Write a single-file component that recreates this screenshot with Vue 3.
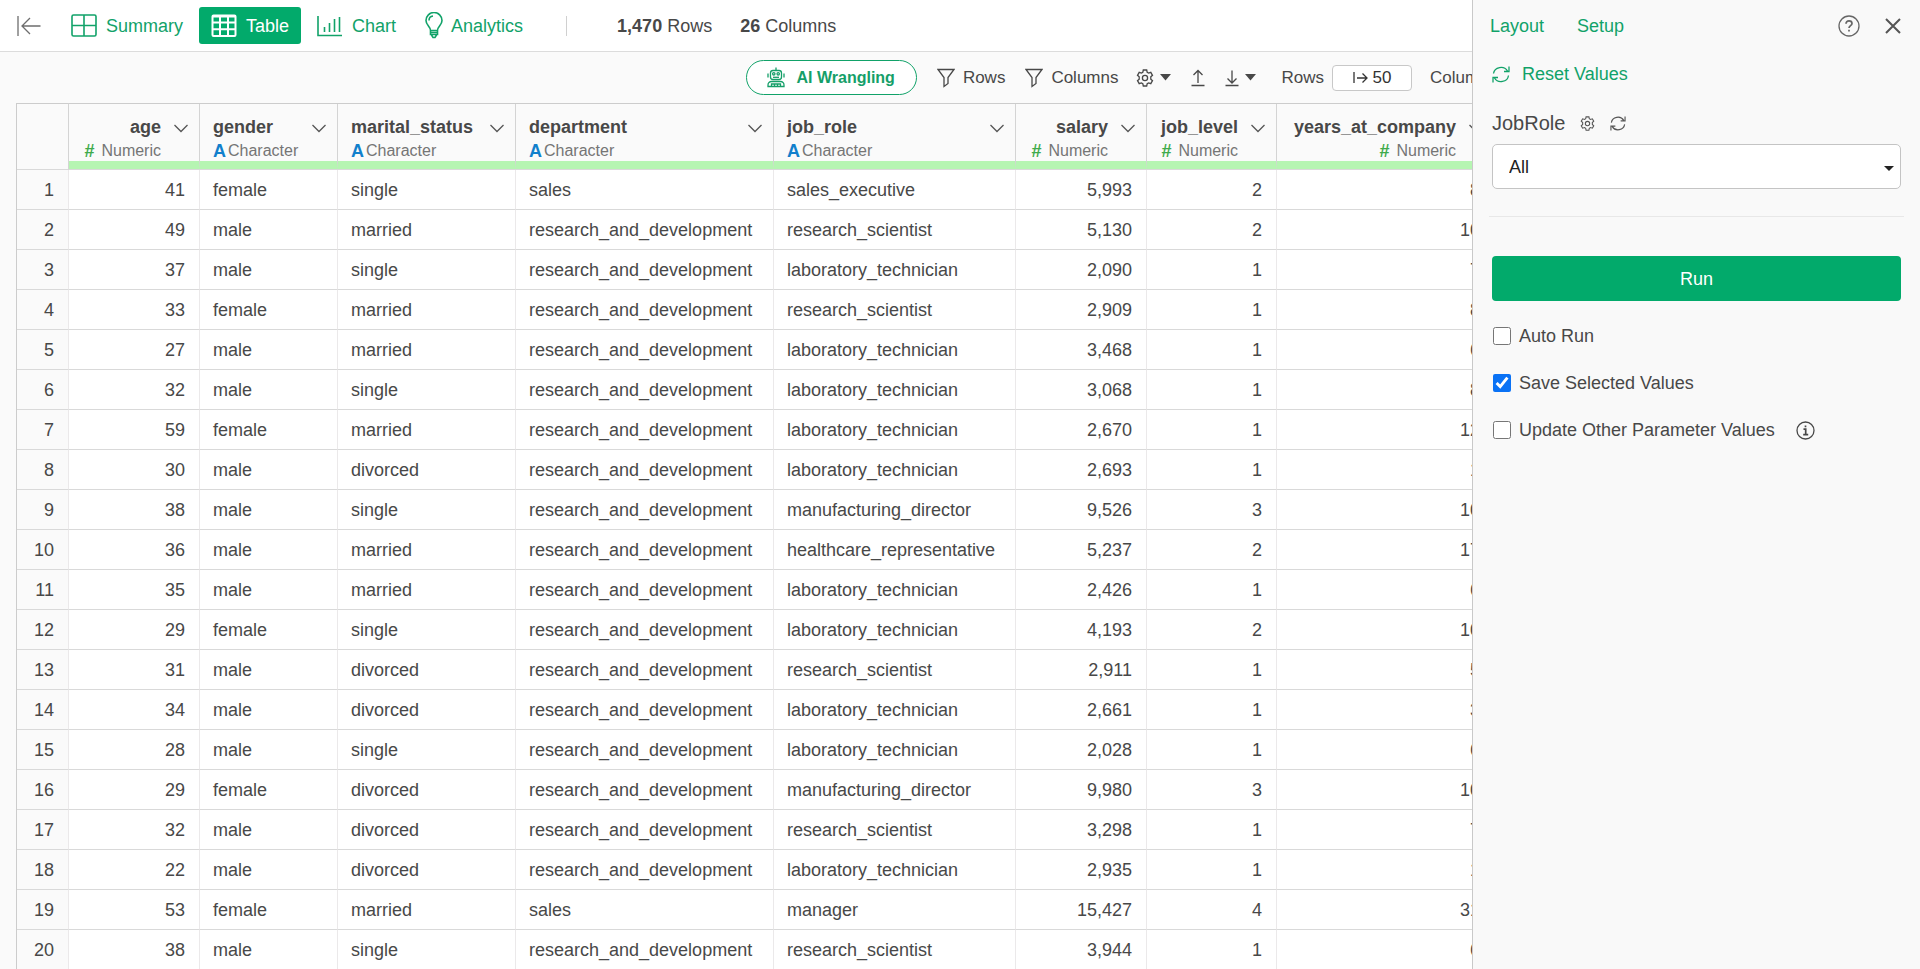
<script setup>
import { ref } from 'vue'

const columns = [
  { key: 'age', numeric: true, cls: 'w-num' },
  { key: 'gender', numeric: false, cls: 'w-gender' },
  { key: 'marital_status', numeric: false, cls: 'w-marital' },
  { key: 'department', numeric: false, cls: 'w-dept' },
  { key: 'job_role', numeric: false, cls: 'w-role' },
  { key: 'salary', numeric: true, cls: 'w-num' },
  { key: 'job_level', numeric: true, cls: 'w-level' },
  { key: 'years_at_company', numeric: true, cls: 'w-years' }
]

const rd = 'research_and_development'
const lab = 'laboratory_technician'
const sci = 'research_scientist'
const rows = [
  [41, 'female', 'single', 'sales', 'sales_executive', '5,993', 2, 8],
  [49, 'male', 'married', rd, sci, '5,130', 2, 10],
  [37, 'male', 'single', rd, lab, '2,090', 1, 7],
  [33, 'female', 'married', rd, sci, '2,909', 1, 8],
  [27, 'male', 'married', rd, lab, '3,468', 1, 6],
  [32, 'male', 'single', rd, lab, '3,068', 1, 8],
  [59, 'female', 'married', rd, lab, '2,670', 1, 12],
  [30, 'male', 'divorced', rd, lab, '2,693', 1, 1],
  [38, 'male', 'single', rd, 'manufacturing_director', '9,526', 3, 10],
  [36, 'male', 'married', rd, 'healthcare_representative', '5,237', 2, 17],
  [35, 'male', 'married', rd, lab, '2,426', 1, 6],
  [29, 'female', 'single', rd, lab, '4,193', 2, 10],
  [31, 'male', 'divorced', rd, sci, '2,911', 1, 5],
  [34, 'male', 'divorced', rd, lab, '2,661', 1, 3],
  [28, 'male', 'single', rd, lab, '2,028', 1, 6],
  [29, 'female', 'divorced', rd, 'manufacturing_director', '9,980', 3, 10],
  [32, 'male', 'divorced', rd, sci, '3,298', 1, 7],
  [22, 'male', 'divorced', rd, lab, '2,935', 1, 1],
  [53, 'female', 'married', 'sales', 'manager', '15,427', 4, 31],
  [38, 'male', 'single', rd, sci, '3,944', 1, 6]
]

const jobRole = ref('All')
const autoRun = ref(false)
const saveValues = ref(true)
const updateOthers = ref(false)
</script>

<template>
  <div class="app">
    <main class="main">
      <header class="topbar">
        <button class="back" aria-label="Collapse">
          <svg width="24" height="22" viewBox="0 0 24 22"><path d="M1 1v20M23.500 11H5M13 3l-8 8 8 8" /></svg>
        </button>
        <nav class="tabs">
          <a href="#" class="tab">
            <svg width="26" height="24" viewBox="0 0 26 24"><rect x="1" y="1" width="24" height="21" rx="1.500" /><path d="M13 1v21M1 11.500h24" /></svg>
            <span>Summary</span>
          </a>
          <a href="#" class="tab active">
            <svg width="26" height="24" viewBox="0 0 26 24"><rect x="1.500" y="1.500" width="23" height="20.500" rx="1" /><path d="M1 2.500h24M1 8.500h24M1 15.200h24M9 3v19M17 3v19" /></svg>
            <span>Table</span>
          </a>
          <a href="#" class="tab">
            <svg width="26" height="24" viewBox="0 0 26 24"><path d="M1 2v19.500h24M7.500 13v5M12.500 9v9M17.500 5v13M22.500 3v15" /></svg>
            <span>Chart</span>
          </a>
          <a href="#" class="tab bulb">
            <svg width="20" height="27" viewBox="0 0 20 27"><path d="M6.500 18.500c0-4-4.500-5-4.500-10a8 8 0 0 1 16 0c0 5-4.500 6-4.500 10zM6.500 18.500v4h7v-4M7.500 23l1.500 2.500h2l1.500-2.500M5 8.500c0-2.500 1.500-4.200 4-4.500M6.500 20.500h7" /></svg>
            <span>Analytics</span>
          </a>
        </nav>
        <span class="divider"></span>
        <p class="counts"><span><b>1,470</b> Rows</span><span><b>26</b> Columns</span></p>
      </header>

      <div class="toolbar">
        <button class="ai">
          <svg width="18" height="21" viewBox="0 0 18 21">
            <path d="M9 0.500v3M1 6.500v4M17 6.500v4" />
            <rect x="3.500" y="3.500" width="11" height="9" rx="2.500" />
            <circle cx="6.800" cy="6.800" r="1.200" /><circle cx="11.200" cy="6.800" r="1.200" />
            <path d="M6 10.300h6" />
            <path d="M1 19.500v-1.500a3.500 3.500 0 0 1 3.500-3.500h9a3.500 3.500 0 0 1 3.500 3.500v1.500zM4.500 19v-2h9v2M7.500 17v2M10.500 17v2" />
          </svg>
          <span>AI Wrangling</span>
        </button>
        <button class="tool filter">
          <svg width="18" height="20" viewBox="0 0 18 20"><path d="M1 1.500h16L11 9.500v6L7 18.500v-9z" /></svg>
          <span>Rows</span>
        </button>
        <button class="tool filter">
          <svg width="18" height="20" viewBox="0 0 18 20"><path d="M1 1.500h16L11 9.500v6L7 18.500v-9z" /></svg>
          <span>Columns</span>
        </button>
        <button class="tool menu" aria-label="Settings">
          <svg width="18" height="18" viewBox="0 0 18 18"><path d="M7.300 1h3.400l.5 2.300 1.400.8 2.200-.7 1.700 2.900-1.700 1.600v2.200l1.700 1.600-1.700 2.900-2.200-.7-1.400.8-.5 2.300H7.300l-.5-2.300-1.400-.8-2.200.7-1.700-2.900 1.700-1.600V7.900L1.500 6.300l1.700-2.900 2.200.7 1.400-.8z" /><circle cx="9" cy="9" r="2.600" /></svg>
          <svg class="caret" width="11" height="7" viewBox="0 0 11 7"><path d="M0 0h11L5.500 6.500z" /></svg>
        </button>
        <button class="tool upload" aria-label="Upload">
          <svg width="14" height="18" viewBox="0 0 14 18"><path d="M7 14V1.500M2.500 6L7 1.500 11.500 6M0.500 16.500h13" /></svg>
        </button>
        <button class="tool menu download" aria-label="Download">
          <svg width="14" height="18" viewBox="0 0 14 18"><path d="M7 1.500v12M2.500 9.500L7 14l4.500-4.500M0.500 16.500h13" /></svg>
          <svg class="caret" width="11" height="7" viewBox="0 0 11 7"><path d="M0 0h11L5.500 6.500z" /></svg>
        </button>
        <span class="rows-label" id="rows-label">Rows</span>
        <button class="amount" aria-labelledby="rows-label">
          <svg width="15" height="14" viewBox="0 0 15 14"><path d="M1 1v11M4 7h10M9.500 2.500L14 7l-4.500 4.500" /></svg>
          <span>50</span>
        </button>
        <span class="cols-label">Columns</span>
      </div>

      <div class="sheet">
        <table>
          <colgroup>
            <col class="w-index" />
            <col v-for="c in columns" :key="c.key" :class="c.cls" />
          </colgroup>
          <thead>
            <tr>
              <th class="index"></th>
              <th v-for="c in columns" :key="c.key">
                <div class="head" :class="{ right: c.numeric }">
                  <div class="names">
                    <div class="name">{{ c.key }}</div>
                    <div class="type">
                      <b :class="c.numeric ? 'hash' : 'letter'">{{ c.numeric ? '#' : 'A' }}</b>
                      <span>{{ c.numeric ? 'Numeric' : 'Character' }}</span>
                    </div>
                  </div>
                  <button class="chev" :aria-label="'Menu for ' + c.key">
                    <svg width="14" height="9" viewBox="0 0 14 9"><path d="M0.500 1L7 7.500 13.500 1" /></svg>
                  </button>
                </div>
              </th>
            </tr>
          </thead>
          <tbody>
            <tr v-for="(r, i) in rows" :key="i">
              <td class="index">{{ i + 1 }}</td>
              <td v-for="(v, j) in r" :key="j" :class="{ num: columns[j].numeric }">{{ v }}</td>
            </tr>
          </tbody>
        </table>
      </div>
    </main>

    <aside class="panel">
      <div class="panel-top">
        <a href="#">Layout</a>
        <a href="#">Setup</a>
        <button class="help" aria-label="Help">
          <svg width="22" height="22" viewBox="0 0 22 22"><circle cx="11" cy="11" r="10" /><path class="thick" d="M8 8.800c0-2 1.300-3 3-3s3 1 3 2.600c0 2.200-3 2.300-3 4.600M11 14.800v1.800" /></svg>
        </button>
        <button class="close" aria-label="Close">
          <svg width="16" height="16" viewBox="0 0 16 16"><path d="M1 1l14 14M15 1L1 15" /></svg>
        </button>
      </div>

      <button class="reset">
        <svg width="18" height="17" viewBox="0 0 18 17"><path d="M1.500 7.500A7.500 7 0 0 1 15.500 5M17 0.500V5.500H12M16.500 9.500A7.500 7 0 0 1 2.500 12M1 16.500V11.500H6" /></svg>
        <span>Reset Values</span>
      </button>

      <div class="param">
        <label for="jobrole">JobRole</label>
        <button aria-label="Parameter settings">
          <svg width="15" height="15" viewBox="0 0 18 18"><path d="M7.300 1h3.400l.5 2.300 1.400.8 2.200-.7 1.700 2.900-1.700 1.600v2.200l1.700 1.600-1.700 2.900-2.200-.7-1.400.8-.5 2.300H7.300l-.5-2.300-1.400-.8-2.200.7-1.700-2.900 1.700-1.600V7.900L1.500 6.300l1.700-2.900 2.200.7 1.400-.8z" /><circle cx="9" cy="9" r="2.600" /></svg>
        </button>
        <button aria-label="Refresh parameter">
          <svg width="16" height="15" viewBox="0 0 18 17"><path d="M1.500 7.500A7.500 7 0 0 1 15.500 5M17 0.500V5.500H12M16.500 9.500A7.500 7 0 0 1 2.500 12M1 16.500V11.500H6" /></svg>
        </button>
      </div>
      <div class="select">
        <select id="jobrole" v-model="jobRole">
          <option>All</option>
        </select>
        <svg class="caret" width="10" height="5" viewBox="0 0 10 5"><path d="M0 0h10L5 5z" /></svg>
      </div>

      <hr />

      <button class="run">Run</button>

      <div class="checks">
        <label><input v-model="autoRun" type="checkbox" /><span>Auto Run</span></label>
        <label><input v-model="saveValues" type="checkbox" /><span>Save Selected Values</span></label>
        <div class="check-row">
          <label><input v-model="updateOthers" type="checkbox" /><span>Update Other Parameter Values</span></label>
          <svg width="19" height="19" viewBox="0 0 19 19"><circle cx="9.500" cy="9.500" r="8.500" /><path class="thick" d="M7.500 8.200h2.200v5.300M7.200 13.700h5M9.500 4.500v1.800" /></svg>
        </div>
      </div>
    </aside>
  </div>
</template>

<style>
body {
  margin: 0;
  background: #fafafa;
}
</style>

<style scoped>
.app {
  display: grid;
  grid-template-columns: minmax(0, 1fr) 448px;
  height: 100vh;
  overflow: hidden;
  background: #fafafa;
  color: #484848;
  font-family: "Liberation Sans", Arial, Helvetica, sans-serif;
  font-size: 18px;
  line-height: 24px;
}
button {
  display: flex;
  align-items: center;
  padding: 0;
  border: 0;
  background: none;
  color: inherit;
  font: inherit;
  cursor: pointer;
}
a {
  color: #11a269;
  text-decoration: none;
}
svg {
  flex: none;
  display: block;
  fill: none;
  stroke: currentColor;
  stroke-width: 1.3;
}
svg.caret {
  fill: currentColor;
  stroke: none;
}
.thick {
  stroke-width: 1.7;
}
.main {
  min-width: 0;
  overflow: hidden;
}
.topbar {
  display: flex;
  align-items: center;
  box-sizing: border-box;
  height: 52px;
  padding-left: 17px;
  border-bottom: 1px solid #dcdcdc;
  background: #fff;
  white-space: nowrap;
}
.back {
  color: #6e6e6e;
  margin-right: 18px;
}
.tabs {
  display: flex;
  gap: 4px;
}
.tab {
  display: flex;
  align-items: center;
  gap: 9px;
  height: 37px;
  padding: 0 12px;
  border-radius: 3px;
}
.tab.bulb {
  gap: 7px;
}
.tab svg {
  stroke-width: 1.6;
}
.tab.active {
  background: #02aa6b;
  color: #fff;
}
.tab.active svg {
  stroke-width: 2;
}
.divider {
  width: 1px;
  height: 20px;
  margin: 0 50px 0 31px;
  background: #d0d0d0;
}
.counts {
  display: flex;
  gap: 28px;
  margin: 0;
}
.toolbar {
  display: flex;
  align-items: center;
  justify-content: flex-end;
  height: 51px;
  font-size: 17px;
  white-space: nowrap;
}
.ai {
  box-sizing: border-box;
  gap: 12px;
  height: 35px;
  padding: 0 21px 0 20px;
  border: 1px solid #11a269;
  border-radius: 18px;
  background: #fff;
  color: #159f69;
  font-weight: 700;
  font-size: 16px;
}
.tool {
  gap: 8px;
}
.filter {
  margin-left: 20px;
}
.menu {
  gap: 6px;
  margin-left: 18px;
}
.upload {
  margin-left: 20px;
}
.download {
  margin-left: 20px;
}
.rows-label {
  margin: 0 8px 0 25px;
}
.amount {
  box-sizing: border-box;
  justify-content: center;
  gap: 5px;
  width: 80px;
  height: 26px;
  border: 1px solid #c8c8c8;
  border-radius: 4px;
  background: #fff;
  color: #333;
}
.cols-label {
  width: 42px;
  margin-left: 18px;
}
.sheet {
  padding-left: 16px;
}
table {
  table-layout: fixed;
  width: 1479px;
  border-collapse: separate;
  border-spacing: 0;
  border-left: 1px solid #ccc;
  background: #fff;
}
.w-index { width: 52px; }
.w-num { width: 131px; }
.w-gender { width: 138px; }
.w-marital { width: 178px; }
.w-dept { width: 258px; }
.w-role { width: 242px; }
.w-level { width: 130px; }
.w-years { width: 218px; }
th,
td {
  box-sizing: border-box;
  border-bottom: 1px solid #d9d9d9;
  white-space: nowrap;
}
th {
  height: 67px;
  padding: 0;
  border-top: 1px solid #ccc;
  background: #fafafa;
  text-align: left;
  vertical-align: top;
}
.head {
  display: flex;
  box-sizing: border-box;
  height: 65px;
  justify-content: space-between;
  gap: 13px;
  padding: 11px 11px 0 13px;
  border-right: 1px solid #d4d4d4;
  border-bottom: 8px solid #b6f5b2;
}
th.index {
  border-right: 1px solid #d4d4d4;
}
.head.right {
  justify-content: flex-end;
  padding-left: 0;
  text-align: right;
}
.name {
  font-weight: 700;
}
.type {
  display: flex;
  align-items: center;
  gap: 2px;
  height: 23px;
  color: #757575;
  font-size: 16px;
  font-weight: 400;
}
.right .type {
  justify-content: flex-end;
  gap: 7px;
}
.letter {
  color: #1180cc;
  font-size: 18px;
}
.hash {
  color: #3fab4c;
  font-size: 18px;
}
.chev {
  height: 26px;
  color: #555;
}
td {
  height: 40px;
  padding: 0 14px 0 13px;
  border-right: 1px solid #ebe9ea;
}
td.num,
td.index {
  text-align: right;
}
td.index {
  background: #fafafa;
}
.panel {
  box-sizing: border-box;
  padding: 0 19px;
  border-left: 1px solid #c9c9c9;
  background: #f9f9f9;
}
.panel-top {
  display: flex;
  align-items: center;
  gap: 33px;
  height: 51px;
  margin-left: -2px;
}
.help {
  margin-left: auto;
  color: #666;
}
.close {
  margin-left: -8px;
  color: #555;
}
.close svg {
  stroke-width: 2;
}
.reset {
  gap: 12px;
  margin-top: 11px;
  color: #11a269;
}
.param {
  display: flex;
  align-items: center;
  gap: 15px;
  margin-top: 25px;
  color: #555;
}
.param label {
  color: #484848;
  font-size: 20px;
}
.select {
  position: relative;
  margin-top: 9px;
}
select {
  box-sizing: border-box;
  width: 100%;
  height: 45px;
  padding: 0 16px;
  border: 1px solid #c4c4c4;
  border-radius: 5px;
  background: #fff;
  color: #222;
  font: inherit;
  appearance: none;
}
.select .caret {
  position: absolute;
  right: 7px;
  top: 22px;
  color: #222;
  pointer-events: none;
}
hr {
  margin: 27px -3px 39px;
  border: 0;
  border-top: 1px solid #e8e8e8;
}
.run {
  justify-content: center;
  width: 100%;
  height: 45px;
  border-radius: 4px;
  background: #02aa6b;
  color: #fff;
}
.checks {
  display: grid;
  gap: 23px;
  margin-top: 23px;
}
.checks label {
  display: flex;
  align-items: center;
  gap: 8px;
}
.checks input {
  width: 18px;
  height: 18px;
  margin: 0 0 0 1px;
  accent-color: #0a72f5;
}
.check-row {
  display: flex;
  align-items: center;
  gap: 21px;
}
</style>
